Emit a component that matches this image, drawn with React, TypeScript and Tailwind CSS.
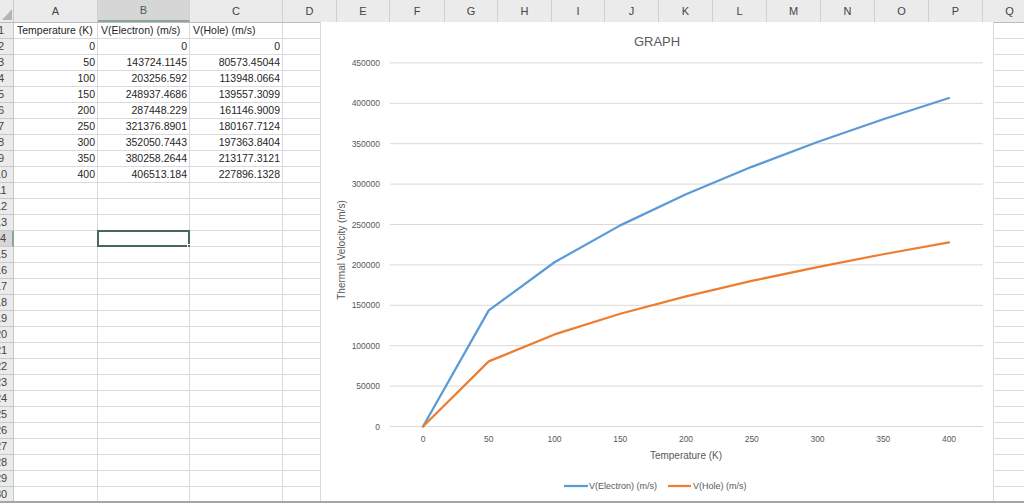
import React from "react";

const COLS = [
  { name: "A", w: 84 },
  { name: "B", w: 92 },
  { name: "C", w: 93 },
  { name: "D", w: 54 },
  { name: "E", w: 53 },
  { name: "F", w: 55 },
  { name: "G", w: 53 },
  { name: "H", w: 54 },
  { name: "I", w: 53 },
  { name: "J", w: 54 },
  { name: "K", w: 54 },
  { name: "L", w: 54 },
  { name: "M", w: 54 },
  { name: "N", w: 54 },
  { name: "O", w: 54 },
  { name: "P", w: 54 },
  { name: "Q", w: 54 },
];

const TEMPS = [0, 50, 100, 150, 200, 250, 300, 350, 400];
const ELECTRON = ["0", "143724.1145", "203256.592", "248937.4686", "287448.229", "321376.8901", "352050.7443", "380258.2644", "406513.184"];
const HOLE = ["0", "80573.45044", "113948.0664", "139557.3099", "161146.9009", "180167.7124", "197363.8404", "213177.3121", "227896.1328"];

const ROWS = 30;
const SELECTED_ROW = 14;

function cellText(row: number, col: number): { text: string; right: boolean } | null {
  if (row === 1) {
    if (col === 0) return { text: "Temperature (K)", right: false };
    if (col === 1) return { text: "V(Electron) (m/s)", right: false };
    if (col === 2) return { text: "V(Hole) (m/s)", right: false };
    return null;
  }
  const i = row - 2;
  if (i < 0 || i >= TEMPS.length) return null;
  if (col === 0) return { text: String(TEMPS[i]), right: true };
  if (col === 1) return { text: ELECTRON[i], right: true };
  if (col === 2) return { text: HOLE[i], right: true };
  return null;
}

// chart coordinates (relative to chart box at 320,22)
const yOf = (v: number) => 404.5 - v * 0.000808;
const xOf = (t: number) => 102 + t * 1.315;

function Chart() {
  const ticks = [0, 50000, 100000, 150000, 200000, 250000, 300000, 350000, 400000, 450000];
  const e = TEMPS.map((t, i) => `${xOf(t)},${yOf(parseFloat(ELECTRON[i]))}`).join(" ");
  const h = TEMPS.map((t, i) => `${xOf(t)},${yOf(parseFloat(HOLE[i]))}`).join(" ");
  return (
    <svg width={673} height={479} className="block" style={{ fontFamily: '"Liberation Sans", Arial, sans-serif' }}>
      <text x={336} y={24} textAnchor="middle" fontSize={13} fill="#595959">
        GRAPH
      </text>
      {ticks.map((v) => (
        <g key={v}>
          <line x1={69} x2={662} y1={yOf(v)} y2={yOf(v)} stroke="#d9d9d9" strokeWidth={1} />
          <text x={59} y={yOf(v) + 3} textAnchor="end" fontSize={8.5} fill="#595959">
            {v}
          </text>
        </g>
      ))}
      {TEMPS.map((t) => (
        <text key={t} x={xOf(t)} y={420} textAnchor="middle" fontSize={8.5} fill="#595959">
          {t}
        </text>
      ))}
      <text x={365} y={437} textAnchor="middle" fontSize={10} fill="#595959">
        Temperature (K)
      </text>
      <text x={0} y={0} transform="translate(24 228) rotate(-90)" textAnchor="middle" fontSize={10} fill="#595959">
        Thermal Velocity (m/s)
      </text>
      <polyline points={e} fill="none" stroke="#5b9bd5" strokeWidth={2.25} strokeLinejoin="round" strokeLinecap="round" />
      <polyline points={h} fill="none" stroke="#ed7d31" strokeWidth={2.25} strokeLinejoin="round" strokeLinecap="round" />
      <line x1={243} x2={267} y1={464} y2={464} stroke="#5b9bd5" strokeWidth={2.25} />
      <text x={268} y={467} fontSize={9} fill="#595959">
        V(Electron) (m/s)
      </text>
      <line x1={347} x2={370} y1={464} y2={464} stroke="#ed7d31" strokeWidth={2.25} />
      <text x={372} y={467} fontSize={9} fill="#595959">
        V(Hole) (m/s)
      </text>
    </svg>
  );
}

export default function App() {
  return (
    <div
      className="relative w-[1024px] h-[503px] overflow-hidden bg-white flex flex-col text-[10.5px] text-[#262626]"
      style={{ fontFamily: '"Liberation Sans", Arial, sans-serif' }}
    >
      {/* column headers */}
      <div className="flex h-[23px] shrink-0 bg-[#ebebeb] border-b border-[#bdbdbd]">
        <div className="w-[14px] shrink-0 border-r border-[#c8c8c8] relative">
          <svg width={14} height={22} className="absolute inset-0">
            <polygon points="12,9 12,20 2,20" fill="#b4b4b4" />
          </svg>
        </div>
        {COLS.map((c) => (
          <div
            key={c.name}
            style={{ width: c.w }}
            className={`shrink-0 flex items-center justify-center border-r border-[#d0d0d0] text-[11px] ${
              c.name === "B" ? "bg-[#d6d6d6] text-[#3f5f4c] border-b-2 border-b-[#8aa596]" : "text-[#444]"
            }`}
          >
            {c.name}
          </div>
        ))}
      </div>

      {/* rows */}
      <div className="flex-1 overflow-hidden flex flex-col">
        {Array.from({ length: ROWS }, (_, r) => r + 1).map((row) => (
          <div key={row} className="flex h-[16px] shrink-0">
            <div
              className={`w-[14px] shrink-0 overflow-hidden flex justify-end border-r border-b border-[#c8c8c8] ${
                row === SELECTED_ROW ? "bg-[#d6d6d6] border-r-2 border-r-[#8aa596]" : "bg-[#ebebeb]"
              }`}
            >
              <div className="w-[24px] shrink-0 text-center text-[11px] leading-[15px] text-[#444]">{row}</div>
            </div>
            {COLS.map((c, ci) => {
              const t = cellText(row, ci);
              const sel = row === SELECTED_ROW && ci === 1;
              return (
                <div
                  key={c.name}
                  style={{ width: c.w }}
                  className={`relative shrink-0 border-r border-b border-[#dadada] leading-[15px] whitespace-nowrap overflow-visible ${
                    t?.right ? "text-right pr-[2px]" : "pl-[3px]"
                  }`}
                >
                  {t?.text}
                  {sel && (
                    <div className="absolute -left-[1px] -top-[1px] w-[93px] h-[17px] border-2 border-[#46695a]">
                      <div className="absolute -right-[3px] -bottom-[3px] w-[4px] h-[4px] bg-[#46695a] border border-white" />
                    </div>
                  )}
                </div>
              );
            })}
          </div>
        ))}
      </div>

      {/* bottom edge */}
      <div className="h-[2px] shrink-0 bg-[#a6a6a6]" />

      {/* embedded chart */}
      <div className="absolute left-[320px] top-[22px] w-[674px] h-[479px] bg-white border-l border-r border-[#d9d9d9]">
        <Chart />
      </div>
    </div>
  );
}
